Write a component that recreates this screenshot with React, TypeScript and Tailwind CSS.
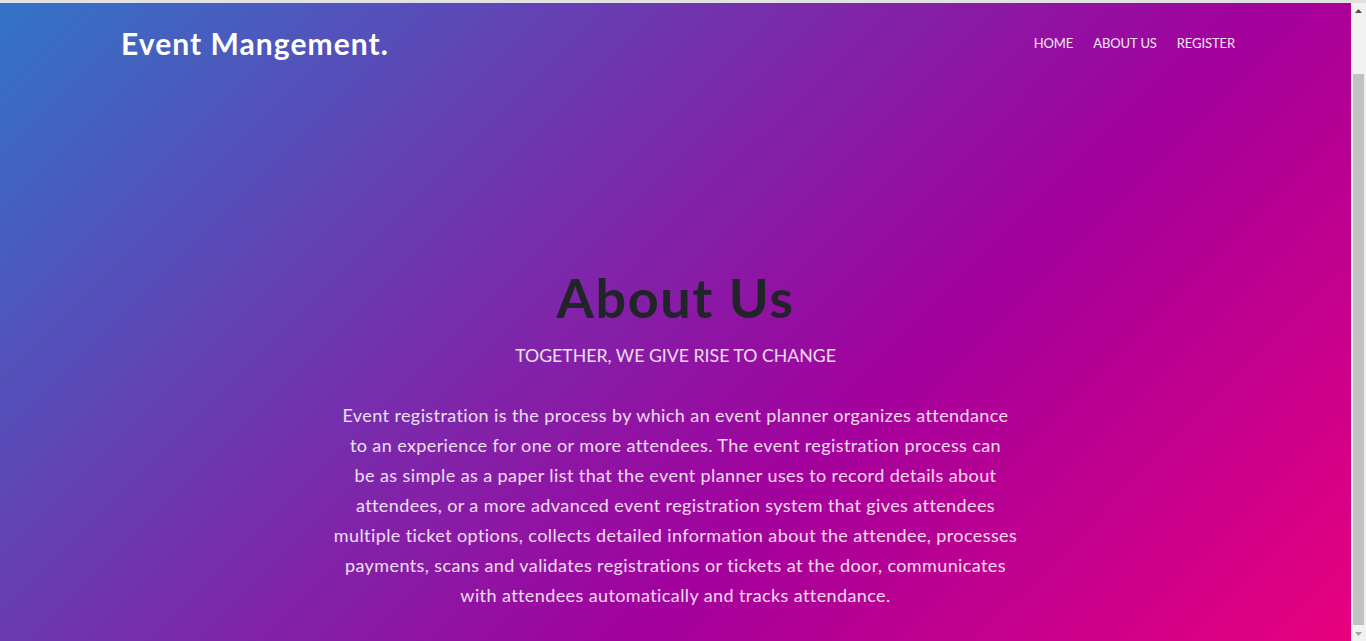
import React from 'react';

// line breaks kept as in the design
const paragraphLines = [
  'Event registration is the process by which an event planner organizes attendance',
  'to an experience for one or more attendees. The event registration process can',
  'be as simple as a paper list that the event planner uses to record details about',
  'attendees, or a more advanced event registration system that gives attendees',
  'multiple ticket options, collects detailed information about the attendee, processes',
  'payments, scans and validates registrations or tickets at the door, communicates',
  'with attendees automatically and tracks attendance.',
];

const navLinks = ['HOME', 'ABOUT US', 'REGISTER'];

const ScrollBar: React.FC = () => (
  <div className="flex w-[15px] shrink-0 flex-col bg-[#f1f1f1]">
    <div className="flex h-[15px] items-center justify-center">
      <svg width="7" height="4" viewBox="0 0 7 4">
        <path d="M3.5 0 L7 4 L0 4 Z" fill="#505050" />
      </svg>
    </div>
    <div className="flex flex-1 flex-col px-[2px] pt-[56px] pb-[1px]">
      <div className="flex-1 bg-[#c1c1c1]" />
    </div>
    <div className="flex h-[15px] items-center justify-center">
      <svg width="7" height="4" viewBox="0 0 7 4">
        <path d="M0 0 L7 0 L3.5 4 Z" fill="#a3a3a3" />
      </svg>
    </div>
  </div>
);

const App: React.FC = () => {
  return (
    <div className="flex h-screen flex-col bg-[#e2e2e2] font-['Lato',sans-serif]">
      <div className="h-[3px] shrink-0 bg-[#e2e2e2]" />
      <div className="flex flex-1 overflow-hidden">
        <div className="flex-1 bg-[linear-gradient(135deg,#3274c6_0%,#a3009c_64%,#e8007e_100%)]">
          <header className="flex h-[80px] items-center justify-between pl-[121px] pr-[116px]">
            <a href="#" className="text-[30px] font-bold tracking-[1.05px] text-white">
              Event Mangement.
            </a>
            <nav className="flex items-center gap-5 pt-[2px]">
              {navLinks.map((link) => (
                <a key={link} href="#" className="text-[13px] tracking-[-0.1px] text-white/90">
                  {link}
                </a>
              ))}
            </nav>
          </header>

          <section className="flex flex-col items-center pt-[183px] text-center">
            <h1 className="text-[54px] leading-[1.2] font-bold tracking-[1.6px] text-[#212529]">
              About Us
            </h1>
            <p className="mt-[11px] text-[17.7px] leading-[27px] text-white/85">
              TOGETHER, WE GIVE RISE TO CHANGE
            </p>
            <p className="mt-[31px] w-[760px] text-[18px] leading-[30px] tracking-[0.4px] text-white/85">
              {paragraphLines.map((line, i) => (
                <React.Fragment key={i}>
                  {line}
                  {i < paragraphLines.length - 1 && <br />}
                </React.Fragment>
              ))}
            </p>
          </section>
        </div>
        <ScrollBar />
      </div>
    </div>
  );
};

export default App;
